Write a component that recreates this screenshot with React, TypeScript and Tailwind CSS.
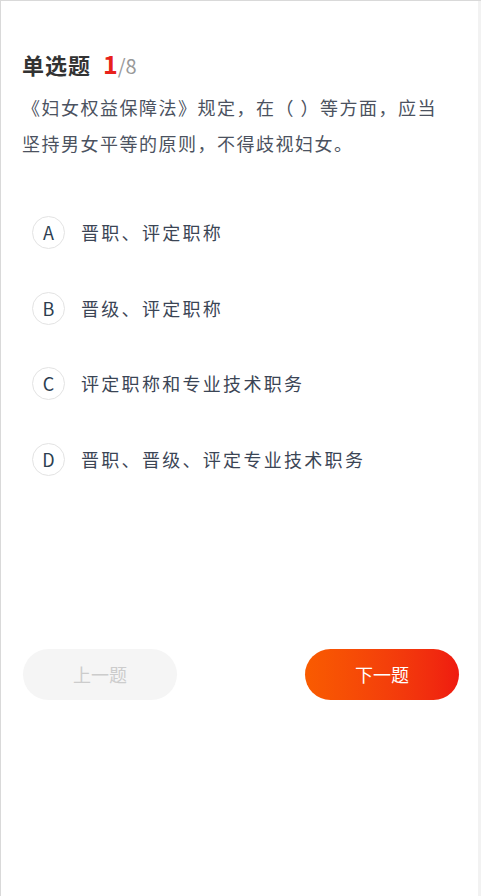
const options = [
  { key: 'A', text: '晋职、评定职称' },
  { key: 'B', text: '晋级、评定职称' },
  { key: 'C', text: '评定职称和专业技术职务' },
  { key: 'D', text: '晋职、晋级、评定专业技术职务' },
];

export default function App() {
  return (
    <div
      className="min-h-[896px] w-[481px] border-l border-t border-[#d9d9d9] bg-white"
      style={{ fontFamily: '"Noto Sans CJK SC", "Noto Sans", sans-serif' }}
    >
      <div className="flex min-h-[895px] border-r-[3px] border-[#f2f2f2]">
        <div className="flex-1 pl-[21px] pr-[19px] pt-[47px]">
          {/* header */}
          <div className="flex h-[40px] items-baseline">
            <span className="text-[22px] font-bold tracking-[1px] text-[#333]">单选题</span>
            <span className="ml-[12px] text-[25px] font-bold leading-none text-[#e8211b]">1</span>
            <span className="text-[20px] leading-none text-[#999]">/8</span>
          </div>
          <p className="mt-[1px] text-[18px] leading-[36px] tracking-[1.5px] text-[#4b5260]">
            《妇女权益保障法》规定，在（ ）等方面，应当
            <br />
            坚持男女平等的原则，不得歧视妇女。
          </p>

          {/* options */}
          <div className="mt-[34px] flex flex-col">
            {options.map(o => (
              <div key={o.key} className="flex h-[75.6px] items-center pl-[10px]">
                <div className="flex h-[33px] w-[33px] items-center justify-center rounded-full border border-[#e3e3e3] text-[18px] text-[#2c3e50]">
                  {o.key}
                </div>
                <span className="ml-[16px] text-[18px] tracking-[2.3px] text-[#3b4555]">{o.text}</span>
              </div>
            ))}
          </div>

          {/* buttons */}
          <div className="mt-[152px] flex justify-between pl-[1px]">
            <button className="h-[51px] w-[154px] rounded-full bg-[#f5f5f5] text-[18px] text-[#cccccc]">
              上一题
            </button>
            <button className="h-[51px] w-[154px] rounded-full bg-gradient-to-r from-[#f95b00] to-[#ef1a10] text-[18px] text-white">
              下一题
            </button>
          </div>
        </div>
      </div>
    </div>
  );
}
